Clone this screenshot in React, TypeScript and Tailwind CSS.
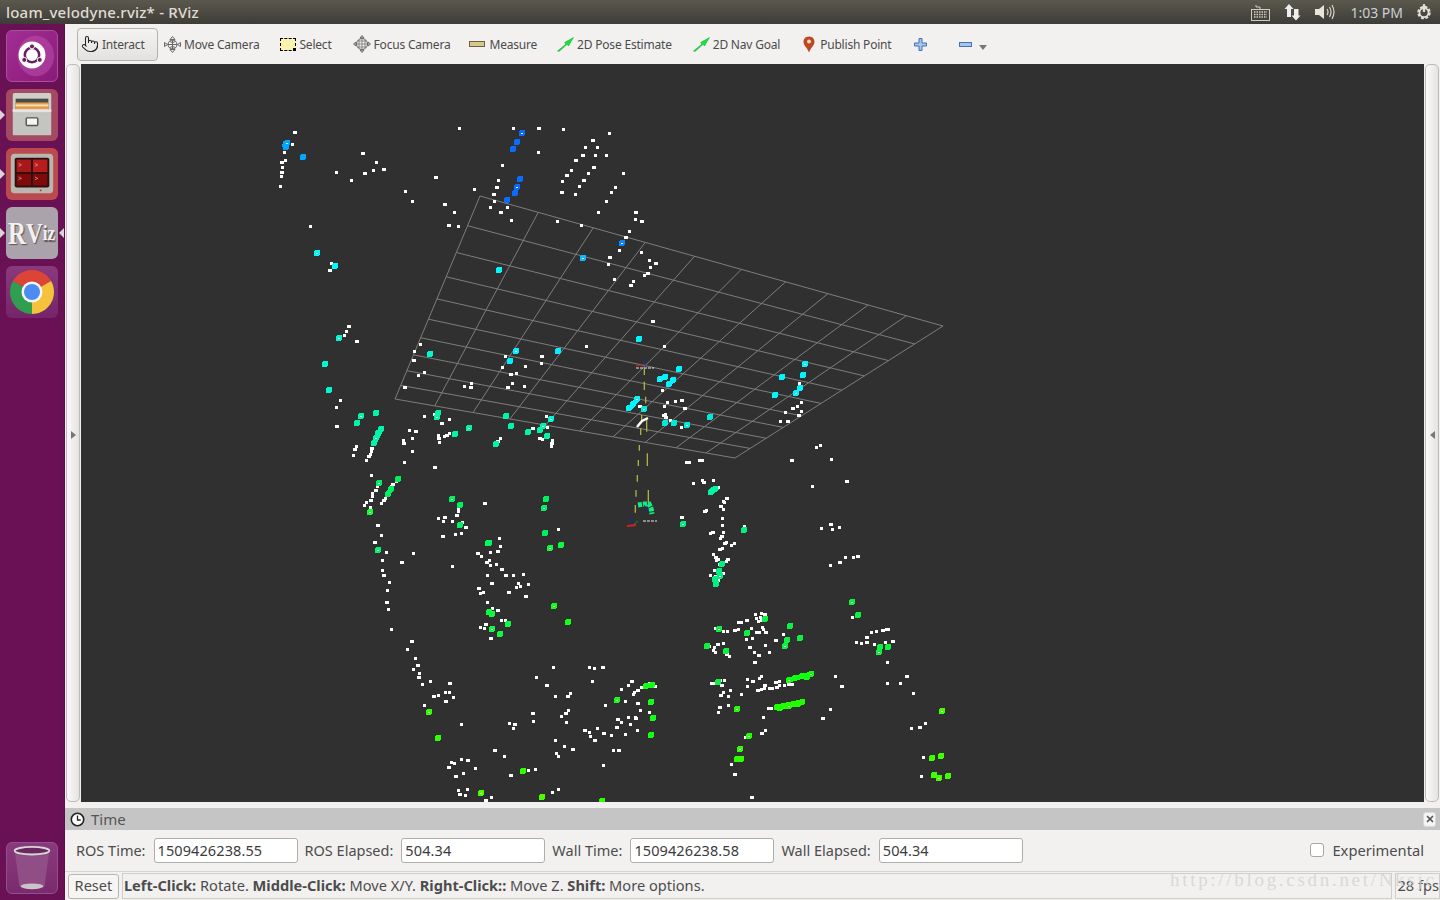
import React from 'react';
import { Pointer, X } from 'lucide-react';

const font = { fontFamily: '"Noto Sans", sans-serif' };

// point cloud, written as x,y pairs read off zoomed crops (ox/oy = crop origin)
type Cloud = { ox: number; oy: number; sx: number; sy: number; white: number[]; blobs: [string, number[]][] };

const clouds: Cloud[] = [
  {
    ox: 270, oy: 120, sx: 3, sy: 3,
    white: [72,37,68,73,43,98,34,127,46,120,37,143,34,157,34,170,31,200,277,100,199,158,245,180,283,161,318,127,310,152,340,147,407,214,427,244,496,171,121,319,184,430,178,452,567,25,730,25,806,25,880,28,1019,41,967,62,982,83,947,83,938,106,975,105,1009,106,917,122,806,96,697,135,969,141,905,150,956,160,890,165,1060,160,878,185,941,181,684,180,929,199,679,202,1037,201,613,207,875,217,915,222,1025,218,670,224,672,243,1009,244,523,253,662,262,711,261,690,276,553,277,984,276,1097,276,723,300,1096,298,1114,304,862,303,933,315,534,316,566,318,1078,334,1065,351,1047,390,1114,397,1017,411,1014,433,1123,466,1133,459,1032,477,1090,484,1080,495,1139,422],
    blobs: [
      ['#0a6cff', [756,40,740,65,728,88,751,176,741,201,734,219,712,240]],
      ['#0a86ff', [1056,368]],
      ['#00a8ff', [50,68,47,80,100,110]],
      ['#10baff', [939,413]],
      ['#00f8ff', [141,400,195,437,687,450]],
    ],
  },
  {
    ox: 380, oy: 190, sx: 2.75, sy: 3,
    white: [748,393,568,469,782,469,828,631,790,638,812,635,838,655,782,648,777,600,714,648,780,675,786,672,784,682,798,690,830,712,757,220,745,233,1115,668,1133,654,1147,650,1160,638,1150,675,1160,663,1102,693,1120,693,1153,581],
    blobs: [
      ['#00f5ff', [1169,521,1162,554,1105,560,1154,595,1143,610,1085,614,712,446,822,536,769,568,783,561,795,583,807,570,708,627,695,642,686,655]],
      ['#00ead8', [727,658,907,681,785,700,808,700,843,705]],
    ],
  },
  {
    ox: 320, oy: 310, sx: 3, sy: 3,
    white: [84,48,79,65,73,77,110,94,60,271,49,292,48,349,300,103,283,125,279,152,314,187,295,196,254,232,433,228,455,220,451,232,556,139,546,171,571,194,588,190,615,168,664,139,663,161,576,219,561,231,613,229,314,319,364,341,387,327,269,361,285,364,277,385,250,390,249,400,277,424,254,457,342,472,154,495,109,408,103,418,99,437,354,376,354,386,357,397,388,370,380,375,374,380,627,362,636,355,680,320,683,352,657,385,668,388,698,392,693,400,694,409,540,385,533,393,343,314,140,452,145,440,150,432,155,425,155,415,133,585,140,577,150,570,158,560,158,550,167,540,172,530,183,580,190,570,195,565,215,530,218,522,230,515,150,592,492,579,415,603,414,595,409,617,355,624,370,634,373,622,397,634,428,638,437,652,405,673,424,670,367,678,537,685,714,658,171,646,183,676],
    blobs: [
      ['#00f8d0', [58,85,15,161,27,241,330,131,692,326]],
      ['#00f0ff', [587,124,570,153,713,122]],
      ['#00f5a8', [124,318,110,338,168,309,355,310,350,322,557,318,572,347,404,371,448,355,527,403,624,367,660,360,670,348,680,379,183,358,175,370,168,385,162,398]],
      ['#00f060', [178,520,235,506,212,538,203,552,396,568,420,585,420,645,678,566,672,593,676,668]],
      ['#10ff30', [150,606,505,698,691,714]],
    ],
  },
  {
    ox: 360, oy: 540, sx: 3, sy: 3,
    white: [42,7,79,37,67,61,125,66,160,40,66,91,70,107,88,128,82,150,80,188,85,209,95,267,155,304,142,328,166,355,172,376,160,388,178,400,175,412,187,432,210,424,268,429,257,458,268,457,220,469,234,466,281,472,257,483,193,496,304,552,353,41,363,49,392,37,412,34,421,20,387,61,378,68,391,76,409,73,423,87,277,80,382,106,437,106,460,106,491,103,394,130,474,130,505,133,356,144,369,157,360,160,445,157,468,142,480,140,496,169,382,187,398,204,413,210,423,240,435,240,375,254,362,262,372,264,392,295,579,382,529,413,558,436,688,382,704,384,728,381,696,424,586,469,621,470,630,459,735,496,517,520,519,544,448,551,463,554,460,564,625,511,617,520,605,529,619,547,672,572,688,578,711,564,730,580,692,589,754,587,703,601,586,602,613,619,637,628,589,639,595,649,403,631,433,650,760,631,776,631,730,677,304,658,322,660,274,667,283,671,265,681,345,685,310,701,286,709,505,690,527,688,451,707,295,752,322,748,297,764,316,766,393,772,376,782,577,757,596,747,815,423,806,436,784,447,833,450,824,457,819,463,845,443,869,430,795,483,833,489,842,511,867,518,772,538,805,532,825,531,826,536,783,548,810,553,769,561,833,570,795,583,884,440],
    blobs: [
      ['#00f868', [53,30,386,8]],
      ['#10f840', [571,24,604,15,397,222,388,216,395,268,419,282,443,253]],
      ['#14ff18', [582,198,625,246,857,439,877,436,772,481,874,487,880,535,874,586]],
      ['#30ff00', [208,516,233,595,489,692,725,783]],
      ['#48ff00', [364,760,547,771]],
    ],
  },
  {
    ox: 680, oy: 440, sx: 3, sy: 3,
    white: [20,66,28,66,58,60,65,62,410,23,420,15,333,60,453,57,66,122,70,126,101,120,41,131,498,123,398,138,115,142,140,176,130,184,134,187,120,200,131,208,78,212,72,215,126,236,126,256,5,232,192,258,425,264,451,254,456,268,477,263,98,276,90,281,131,278,124,289,120,295,140,308,134,311,153,315,162,310,117,328,127,324,99,342,105,352,115,358,110,362,141,358,140,365,118,372,102,391,92,405,131,400,105,410,116,420,450,375,478,366,496,353,519,351,533,348,226,524,243,520,252,523,228,536,240,532,243,541,236,543,250,567,200,541,184,546,174,548,107,565,129,573,142,573,162,571,175,567,213,564,228,576,238,578,246,561,257,578,199,599,216,596,285,600,309,582,129,609,111,612,102,621,87,620,207,621,100,632,105,636,138,644,147,648,222,636,234,645,267,636,257,616,222,666,573,578,588,573,606,570,618,569,626,567,558,591,528,606,543,611,560,606,582,612,616,606,636,603,621,666,466,708,483,738,621,729,661,729,678,708,699,759,201,717,217,725,237,714,243,708,285,726,297,723,201,738,254,735,254,744,243,747,232,750,267,744,277,744,290,741,298,737,312,735,324,733,337,733,93,730,102,729,120,720,132,720,123,736,150,752,129,756,120,765,144,768,183,762,117,801,144,795,114,816,264,804,274,805,450,807,426,836,249,831,255,871,243,880,195,891,735,849,717,861,693,865,153,972,162,1002,729,951,723,1009,214,1073,516,533],
    blobs: [
      ['#00f5a0', [92,155,98,151,104,147]],
      ['#00f080', [8,252,193,271,127,373,117,392,120,408,104,418,107,433]],
      ['#10f040', [515,485,534,524,255,538,330,557,117,566,200,578,322,600,359,594,315,619,82,617,138,633,600,620,598,636,624,621,114,727]],
      ['#10ff10', [326,720,344,713,365,708,382,710,392,703]],
      ['#20ff00', [171,808,290,802,300,803,313,797,326,798,339,792,354,793,367,787,207,887]],
      ['#30ff00', [181,926,172,958,184,956]],
      ['#40ff00', [786,814,757,953,782,949,762,1005,777,1013,804,1009]],
    ],
  },
];

// runs of points that merge into a solid streak
const streaks: [string, number, number, number, number, number][] = [
  ['#00f5a8', 374, 443, 381, 429, 5],
  ['#00f060', 387, 495, 392, 488, 5],
  ['#00f5ff', 630, 408, 638, 399, 5],
  ['#00f5ff', 669, 384, 674, 380, 4],
  ['#20ff00', 776, 707, 802, 702, 5],
  ['#10ff10', 789, 680, 811, 674, 5],
  ['#00f5a0', 711, 492, 718, 488, 4],
  ['#00a8ff', 286, 141, 285, 147, 6],
];

// grid quad corners on the page, 10 x 10 cells in perspective
const quad = [[480, 196], [943, 326], [735, 458], [395, 399]];

function gridPoint(u: number, v: number) {
  const [[x0, y0], [x1, y1], [x2, y2], [x3, y3]] = quad;
  const dx = x0 - x1 + x2 - x3;
  const dy = y0 - y1 + y2 - y3;
  const d = (x1 - x2) * (y3 - y2) - (x3 - x2) * (y1 - y2);
  const g = (dx * (y3 - y2) - (x3 - x2) * dy) / d;
  const h = ((x1 - x2) * dy - dx * (y1 - y2)) / d;
  const w = g * u + h * v + 1;
  return [
    (x1 - x0 + g * x1) * u / w + (x3 - x0 + h * x3) * v / w + x0 / w,
    (y1 - y0 + g * y1) * u / w + (y3 - y0 + h * y3) * v / w + y0 / w,
  ];
}

function Grid() {
  const lines = [];
  for (let i = 0; i <= 10; i++) {
    const t = i / 10;
    const a = gridPoint(t, 0), b = gridPoint(t, 1), c = gridPoint(0, t), d = gridPoint(1, t);
    lines.push(<line key={`u${i}`} x1={a[0]} y1={a[1]} x2={b[0]} y2={b[1]} />);
    lines.push(<line key={`v${i}`} x1={c[0]} y1={c[1]} x2={d[0]} y2={d[1]} />);
  }
  return <g stroke="#7d7d7d" strokeWidth="1">{lines}</g>;
}

function Points() {
  return (
    <g shapeRendering="crispEdges">
      {streaks.map((s, i) => (
        <line key={i} x1={s[1]} y1={s[2]} x2={s[3]} y2={s[4]} stroke={s[0]} strokeWidth={s[5]} />
      ))}
      {clouds.map((c, ci) => {
        const out = [];
        for (let i = 0; i < c.white.length; i += 2) {
          const w = i % 6 === 0 ? 4 : 3;
          out.push(<rect key={`w${ci}-${i}`} x={Math.round(c.ox + c.white[i] / c.sx - 1.5)} y={Math.round(c.oy + c.white[i + 1] / c.sy - 1.5)} width={w} height="3" fill="#fff" />);
        }
        c.blobs.forEach(([color, p], bi) => {
          for (let i = 0; i < p.length; i += 2) {
            const x = c.ox + p[i] / c.sx;
            const y = c.oy + p[i + 1] / c.sy;
            out.push(<rect key={`b${ci}-${bi}-${i}`} x={Math.round(x) - 3} y={Math.round(y) - 3} width="6" height="6" rx="2" fill={color} />);
            if (i % 8 === 0) out.push(<rect key={`d${ci}-${bi}-${i}`} x={Math.round(x) - 1} y={Math.round(y)} width="2" height="1" fill="#fff" />);
          }
        });
        return out;
      })}
    </g>
  );
}

// dashed odometry track and the two little axes markers
function Track() {
  const p = (x: number, y: number) => [620 + x / 3, 360 + y / 3];
  const dashes = [[73,25,73,45],[73,65,73,90],[77,110,77,130],[65,165,65,185],[62,205,62,225],[58,255,58,272],[55,300,55,318],[52,345,52,365],[48,390,48,410],[46,435,46,458],[80,175,80,215],[82,280,82,318],[85,390,85,428]];
  return (
    <g>
      {dashes.map((d, i) => {
        const a = p(d[0], d[1]), b = p(d[2], d[3]);
        return <line key={i} x1={a[0]} y1={a[1]} x2={b[0]} y2={b[1]} stroke="#b4b440" strokeWidth="1.3" />;
      })}
      <path d="M637 427 L642 421 L648 418" stroke="#fff" strokeWidth="2.5" fill="none" />
      <path d="M638 505 L644 504 L649 504 L651 508 L652 514" stroke="#10f080" strokeWidth="5" strokeDasharray="4 1" fill="none" />
      <path d="M630 517 L633 523 M644 505 L648 511" stroke="#1020c0" strokeWidth="1" />
      <path d="M627 526 L636 525" stroke="#d02020" strokeWidth="2" />
      <path d="M634 524 L638 521" stroke="#109020" strokeWidth="1" />
      <path d="M643 521 L657 521" stroke="#e8e8e8" strokeWidth="1" strokeDasharray="3 1" />
      <path d="M636 366 L645 364" stroke="#d02020" strokeWidth="1" />
      <path d="M645 360 L645 366" stroke="#1030a0" strokeWidth="1" />
      <path d="M636 368 L654 368" stroke="#e8e8e8" strokeWidth="1" strokeDasharray="3 1" />
    </g>
  );
}

function Tile({ className, children, arrow, rightArrow }: { className: string; children: React.ReactNode; arrow?: boolean; rightArrow?: boolean }) {
  return (
    <div className={`relative w-[52px] h-[52px] rounded-md flex items-center justify-center overflow-visible ${className}`}>
      {arrow && <div className="absolute left-[-6px] top-[21px] w-0 h-0 border-y-[5px] border-y-transparent border-l-[5px] border-l-[#d8d4d8]" />}
      {rightArrow && <div className="absolute right-[-6px] top-[21px] w-0 h-0 border-y-[5px] border-y-transparent border-r-[5px] border-r-[#d8d4d8]" />}
      {children}
    </div>
  );
}

function sector(a0: number, a1: number, r: number) {
  const rad = Math.PI / 180;
  const x0 = 26 + r * Math.cos(a0 * rad), y0 = 26 + r * Math.sin(a0 * rad);
  const x1 = 26 + r * Math.cos(a1 * rad), y1 = 26 + r * Math.sin(a1 * rad);
  return `M26 26 L${x0} ${y0} A${r} ${r} 0 0 1 ${x1} ${y1} Z`;
}

function Launcher() {
  return (
    <div className="w-[65px] shrink-0 bg-[#6a1055] flex flex-col gap-[7px] pt-[6px] pb-[6px] items-center pr-[1px] border-r border-[#5a0e48]">
      <Tile className="bg-gradient-to-br from-[#a22e93] to-[#8a1a7a] border border-[#a8509a]">
        <svg width="50" height="50" viewBox="0 0 52 52">
          <ellipse cx="30" cy="26" rx="19" ry="21" fill="#c458b4" opacity="0.45" />
          <circle cx="26" cy="25" r="14" fill="#fff" />
          <circle cx="26" cy="25" r="7.5" fill="none" stroke="#6b1e63" strokeWidth="2.6" />
          <circle cx="26" cy="16" r="2.6" fill="#6b1e63" stroke="#fff" />
          <circle cx="18" cy="30" r="2.6" fill="#6b1e63" stroke="#fff" />
          <circle cx="34" cy="30" r="2.6" fill="#6b1e63" stroke="#fff" />
        </svg>
      </Tile>
      <Tile arrow className="bg-[#a34a62]">
        <svg width="50" height="50" viewBox="0 0 52 52">
          <rect x="6" y="3" width="40" height="20" rx="2" fill="#cfcfca" />
          <rect x="9" y="9" width="34" height="14" fill="#4a4a48" />
          <rect x="9" y="13" width="34" height="8" fill="#e89a4c" />
          <rect x="9" y="15" width="34" height="2" fill="#f8e0b0" />
          <rect x="6" y="20" width="40" height="27" rx="1" fill="#c4c4c0" />
          <rect x="6" y="20" width="40" height="3" fill="#e4e4e0" />
          <rect x="20" y="29" width="12" height="8" rx="1" fill="#f4f4f0" stroke="#555" strokeWidth="1.5" />
        </svg>
      </Tile>
      <Tile arrow className="bg-[#bb4a4e]">
        <svg width="50" height="50" viewBox="0 0 52 52">
          <rect x="4" y="5" width="44" height="41" rx="4" fill="#b8b6ae" />
          <rect x="8" y="9" width="36" height="31" rx="2" fill="#2c1010" />
          <rect x="10" y="11" width="15" height="13" fill="#a81818" />
          <rect x="27" y="11" width="15" height="13" fill="#b81c1c" />
          <rect x="10" y="26" width="15" height="12" fill="#7e0a0a" />
          <rect x="27" y="26" width="15" height="12" fill="#7e0a0a" />
          <path d="M12 15 l3 1.5 l-3 1.5 M29 15 l3 1.5 l-3 1.5 M12 29 l3 1.5 l-3 1.5 M29 29 l3 1.5 l-3 1.5" stroke="#e8a8a8" fill="none" strokeWidth="0.7" />
          <circle cx="35" cy="43" r="1" fill="#e02020" />
        </svg>
      </Tile>
      <Tile arrow rightArrow className="bg-[#aba3ab]">
        <div className="text-[#f2f0f0] font-bold whitespace-nowrap [text-shadow:1px_1px_1px_#555] leading-none flex items-center scale-y-125" style={{ fontFamily: '"Liberation Serif", serif' }}>
          <span className="text-[25px]">R</span>
          <span className="text-[23px]">V</span>
          <span className="text-[17px]">iz</span>
        </div>
      </Tile>
      <Tile className="bg-gradient-to-b from-[#8a3a7c] to-[#76246a]">
        <svg width="52" height="52" viewBox="0 0 52 52">
          <path d={sector(210, 330, 22)} fill="#dc4437" />
          <path d={sector(330, 450, 22)} fill="#f5c33b" />
          <path d={sector(90, 210, 22)} fill="#2f9e4f" />
          <circle cx="26" cy="26" r="10.5" fill="#f4f4f4" />
          <circle cx="26" cy="26" r="8" fill="#4c8bf0" />
        </svg>
      </Tile>
      <Tile className="mt-auto bg-gradient-to-b from-[#8a3a7c] to-[#7a2a6e] border border-[#94508a]">
        <svg width="50" height="50" viewBox="0 0 52 52">
          <path d="M8 8 L13 45 Q26 50 39 45 L44 8 Z" fill="#8f4f86" />
          <ellipse cx="26" cy="8" rx="18" ry="4" fill="#6a2a60" stroke="#d8d8d8" strokeWidth="2" />
          <ellipse cx="26" cy="45" rx="12" ry="3" fill="#c8c4c8" />
        </svg>
      </Tile>
    </div>
  );
}

function MoveIcon() {
  return (
    <svg width="17" height="17" viewBox="0 0 17 17" fill="none" stroke="#666" strokeWidth="1">
      <circle cx="8.5" cy="8.5" r="4.5" />
      <path d="M8.5 4v9M4 8.5h9M5.5 5.5q3 2 6 0M5.5 11.5q3-2 6 0" />
      <path d="M8.5 0.5l2.5 3h-5zM8.5 16.5l2.5-3h-5zM0.5 6.5l3 2-3 2zM16.5 6.5l-3 2 3 2z" fill="#eee" />
    </svg>
  );
}

function FocusIcon() {
  return (
    <svg width="18" height="18" viewBox="0 0 18 18" fill="none" stroke="#666" strokeWidth="1">
      <circle cx="9" cy="9" r="5.5" />
      <path d="M9 3v12M3 9h12M5 6h8M5 12h8M6 5v8M12 5v8" strokeWidth="0.7" />
      <path d="M9 0.5l2 2.5h-4zM9 17.5l2-2.5h-4zM0.5 9l2.5-2v4zM17.5 9l-2.5-2v4z" fill="#ddd" />
    </svg>
  );
}

function ArrowIcon() {
  return (
    <svg width="17" height="15" viewBox="0 0 17 15">
      <path d="M0.5 14 L9 7 L7.5 5.5 L16.5 0.5 L11.5 9 L10 7.5 L2 14.5 Z" fill="#12e83a" stroke="#0a8a20" strokeWidth="0.4" />
    </svg>
  );
}

function Tool({ icon, label, className }: { icon: React.ReactNode; label: string; className?: string }) {
  return (
    <div className={`flex items-center gap-[3px] whitespace-nowrap ${className ?? ''}`}>
      {icon}
      <span className="mt-[1px]">{label}</span>
    </div>
  );
}

function Toolbar() {
  return (
    <div className="h-10 shrink-0 bg-[#f2f1f0] flex items-center text-[12px] tracking-[-0.2px] text-[#4c4c4c] pl-[12px]">
      <div className="flex h-[33px] w-[81px] items-center gap-[3px] rounded-[4px] border border-[#b4b2ae] bg-gradient-to-b from-[#f4f3f2] to-[#e4e2e0] pl-[3px] mr-[6px]">
        <Pointer size={18} strokeWidth={1.4} color="#222" />
        <span className="mt-[2px]">Interact</span>
      </div>
      <Tool icon={<MoveIcon />} label="Move Camera" />
      <Tool
        className="ml-[21px]"
        label="Select"
        icon={<div className="relative w-[16px] h-[13px] bg-[#fbf2b0] border border-dashed border-black"><div className="absolute right-[-1px] bottom-[-1px] w-[3px] h-[3px] bg-black" /></div>}
      />
      <Tool className="ml-[21px]" icon={<FocusIcon />} label="Focus Camera" />
      <Tool
        className="ml-[19px]"
        label="Measure"
        icon={<div className="w-[16px] h-[6px] mr-[1px] bg-[#d8c88a] border border-[#6a6248]" />}
      />
      <Tool className="ml-[20px]" icon={<ArrowIcon />} label="2D Pose Estimate" />
      <Tool className="ml-[21px]" icon={<ArrowIcon />} label="2D Nav Goal" />
      <Tool
        className="ml-[21px]"
        label="Publish Point"
        icon={
          <svg width="16" height="17" viewBox="0 0 16 17">
            <path d="M8 0.5 C4 0.5 2.5 3.5 2.5 6 C2.5 9.5 6.5 12 8 16.5 C9.5 12 13.5 9.5 13.5 6 C13.5 3.5 12 0.5 8 0.5Z" fill="#bb4a22" />
            <circle cx="8" cy="5.5" r="2" fill="#f0d8c8" />
          </svg>
        }
      />
      <svg width="13" height="13" viewBox="0 0 13 13" className="ml-[23px]">
        <path d="M5 0.5h3v4.5h4.5v3H8v4.5H5V8H0.5V5H5z" fill="#a8c4e8" stroke="#3f72b8" />
      </svg>
      <svg width="13" height="5" viewBox="0 0 13 5" className="ml-[32px]">
        <rect x="0.5" y="0.5" width="12" height="4" fill="#a8c4e8" stroke="#3f72b8" />
      </svg>
      <div className="ml-[7px] mt-[6px] w-0 h-0 border-x-[4px] border-x-transparent border-t-[5px] border-t-[#777]" />
    </div>
  );
}

function Handle({ side }: { side: 'left' | 'right' }) {
  return (
    <div className="w-[16px] shrink-0 pl-[1px] pr-[1px] flex">
      <div className="w-[14px] rounded-[5px] border border-[#bdbbb6] bg-gradient-to-r from-[#fafafa] to-[#e4e3e1] flex items-center justify-center pt-[4px]">
        {side === 'left' ? (
          <div className="w-0 h-0 border-y-[4px] border-y-transparent border-l-[5px] border-l-[#777]" />
        ) : (
          <div className="w-0 h-0 border-y-[4px] border-y-transparent border-r-[5px] border-r-[#777]" />
        )}
      </div>
    </div>
  );
}

function TimeField({ label, value, className }: { label: string; value: string; className?: string }) {
  return (
    <div className={`flex items-center gap-[8px] ${className ?? ''}`}>
      <span className="whitespace-nowrap">{label}</span>
      <div className="w-[144px] h-[25px] bg-white border border-[#b0aea9] rounded-[3px] pl-[3px] flex items-center text-[#3c3c3c] tracking-[0.1px]">{value}</div>
    </div>
  );
}

export default function App() {
  return (
    <div className="relative w-[1440px] h-[900px] overflow-hidden flex flex-col bg-[#f2f1f0]" style={font}>
      <div className="h-6 shrink-0 bg-gradient-to-b from-[#5b594e] to-[#3d3c37] flex items-center justify-between pl-[6px] text-[15px] tracking-[0.2px] font-medium text-[#e0dcd2]">
        <span>loam_velodyne.rviz* - RViz</span>
        <div className="flex items-center pr-[7px] text-[#c8d0d8]">
          <svg width="19" height="17" viewBox="0 0 19 17" fill="none" stroke="#d0ccc2">
            <rect x="0.5" y="5.5" width="18" height="11" />
            <path d="M9 5V3H5V1" />
            <path d="M3 8h13M3 10.5h13M3 13h13" strokeDasharray="1.5 1" strokeWidth="1.5" />
          </svg>
          <svg width="17" height="17" viewBox="0 0 17 17" fill="#eee" className="ml-[14px]">
            <path d="M5 0 L9.5 5 H7 V13 H3 V5 H0.5Z" />
            <path d="M12 16.5 L16.5 11.5 H14.5 V5 H10 V11.5 H7.5Z" />
          </svg>
          <svg width="20" height="16" viewBox="0 0 20 16" fill="none" stroke="#d8d4ca" className="ml-[14px]">
            <path d="M0 5h4l5-4v14l-5-4H0z" fill="#e8e4da" stroke="none" />
            <path d="M12 5q2 3 0 6M14.5 3q3 5 0 10M17 1q4 7 0 14" strokeWidth="1.2" />
          </svg>
          <span className="ml-[15px] text-[14px] font-normal tracking-normal">1:03 PM</span>
          <svg width="18" height="18" viewBox="0 0 16 16" fill="none" className="ml-[12px]">
            <circle cx="8" cy="8.5" r="5" stroke="#e4e0d6" strokeWidth="2" strokeDasharray="2.5 1.4" />
            <circle cx="8" cy="8.5" r="4" stroke="#e4e0d6" strokeWidth="1.5" />
            <path d="M8 1v7" stroke="#e4e0d6" strokeWidth="2" />
          </svg>
        </div>
      </div>
      <div className="flex flex-1 min-h-0">
        <Launcher />
        <div className="flex-1 min-w-0 flex flex-col">
          <Toolbar />
          <div className="h-[738px] shrink-0 flex">
            <Handle side="left" />
            <div className="flex-1 min-w-0 bg-[#303030]">
              <svg className="block w-full h-full" viewBox="81 64 1343 738">
                <Grid />
                <Track />
                <Points />
              </svg>
            </div>
            <Handle side="right" />
          </div>
          <div className="h-[6px] shrink-0" />
          <div className="h-[22px] shrink-0 bg-[#c5c5c5] flex items-center justify-between text-[15px] text-[#555] pl-[5px] pr-[4px]">
            <div className="flex items-center gap-[6px]">
              <svg width="15" height="15" viewBox="0 0 15 15" fill="#fff" stroke="#222">
                <circle cx="7.5" cy="7.5" r="6.2" strokeWidth="1.6" />
                <path d="M7.5 3.5v4.5h3.2" fill="none" strokeWidth="1.3" />
              </svg>
              <span>Time</span>
            </div>
            <div className="w-[13px] h-[15px] bg-[#f4f4f4] rounded-[3px] flex items-center justify-center border border-[#d8d8d8]">
              <X size={10} strokeWidth={4} color="#555" />
            </div>
          </div>
          <div className="h-[41px] shrink-0 flex items-center pl-[11px] pr-[16px] text-[14.5px] text-[#4c4c4c]">
            <TimeField label="ROS Time:" value="1509426238.55" />
            <TimeField label="ROS Elapsed:" value="504.34" className="ml-[7px]" />
            <TimeField label="Wall Time:" value="1509426238.58" className="ml-[7px]" />
            <TimeField label="Wall Elapsed:" value="504.34" className="ml-[7px]" />
            <div className="ml-auto flex items-center gap-[8px]">
              <div className="w-[14px] h-[14px] bg-white border border-[#a8a6a1] rounded-[3px]" />
              <span className="text-[14.7px]">Experimental</span>
            </div>
          </div>
          <div className="h-[29px] shrink-0 border-t border-[#d8d6d2] flex items-center pl-[3px] gap-[3px] text-[14.6px] text-[#4c4c4c]">
            <div className="w-[51px] h-[25px] border border-[#b8b6b1] rounded-[3px] bg-[#f6f5f4] flex items-center justify-center">Reset</div>
            <div className="w-[1271px] h-[26px] border border-[#d0cec9] flex items-center pl-[1px] whitespace-nowrap">
              <b>Left-Click:</b>&nbsp;Rotate.&nbsp;<b>Middle-Click:</b>&nbsp;Move X/Y.&nbsp;<b>Right-Click::</b>&nbsp;Move Z.&nbsp;<b>Shift:</b>&nbsp;More options.
            </div>
            <div className="flex-1 h-[26px] border border-[#d0cec9] flex items-center pl-[2px] whitespace-nowrap">28 fps</div>
          </div>
        </div>
      </div>
      {/* csdn watermark burnt into the screenshot */}
      <div className="absolute left-[1170px] top-[866px] text-[19px] tracking-[2.7px] text-[#d4d3d0] opacity-80 whitespace-nowrap pointer-events-none" style={{ fontFamily: '"Liberation Serif", serif' }}>
        http://blog.csdn.net/Nksjc
      </div>
    </div>
  );
}
